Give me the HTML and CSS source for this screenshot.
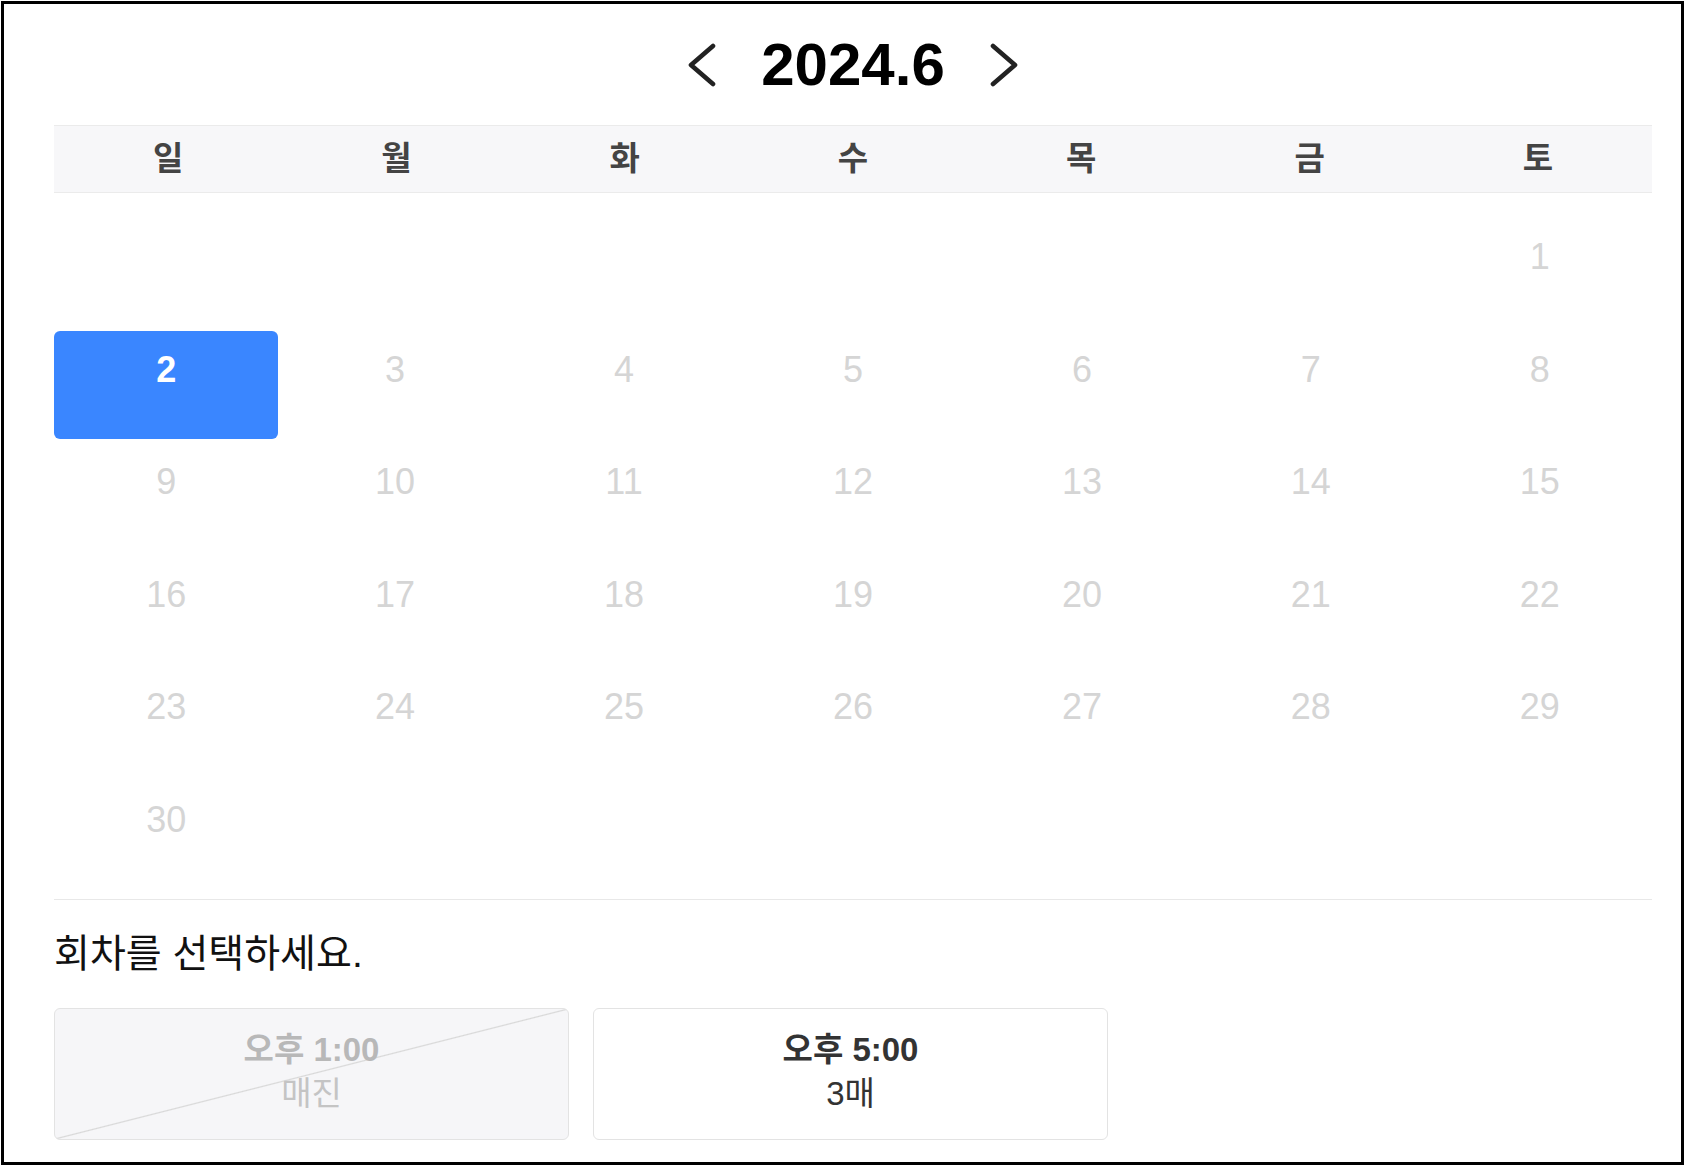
FILE: index.html
```
<!DOCTYPE html>
<html lang="ko">
<head>
    <meta charset="UTF-8">
    <meta name="viewport" content="width=device-width, initial-scale=1.0">
    <title>공연 예매 - 날짜 선택</title>
    <link rel="stylesheet" href="styles.css">
</head>
<body>
    <div class="frame">
        <div class="month-nav">
            <svg class="nav-arrow" viewBox="0 0 30 44"><polyline points="26,3 4,22 26,41"/></svg>
            <span class="month-title">2024.6</span>
            <svg class="nav-arrow" viewBox="0 0 30 44"><polyline points="4,3 26,22 4,41"/></svg>
        </div>

        <div class="week-head">
            <span>일</span>
            <span>월</span>
            <span>화</span>
            <span>수</span>
            <span>목</span>
            <span>금</span>
            <span>토</span>
        </div>

        <div class="days">
            <div class="day"></div>
            <div class="day"></div>
            <div class="day"></div>
            <div class="day"></div>
            <div class="day"></div>
            <div class="day"></div>
            <div class="day">1</div>

            <div class="day selected">2</div>
            <div class="day">3</div>
            <div class="day">4</div>
            <div class="day">5</div>
            <div class="day">6</div>
            <div class="day">7</div>
            <div class="day">8</div>

            <div class="day">9</div>
            <div class="day">10</div>
            <div class="day">11</div>
            <div class="day">12</div>
            <div class="day">13</div>
            <div class="day">14</div>
            <div class="day">15</div>

            <div class="day">16</div>
            <div class="day">17</div>
            <div class="day">18</div>
            <div class="day">19</div>
            <div class="day">20</div>
            <div class="day">21</div>
            <div class="day">22</div>

            <div class="day">23</div>
            <div class="day">24</div>
            <div class="day">25</div>
            <div class="day">26</div>
            <div class="day">27</div>
            <div class="day">28</div>
            <div class="day">29</div>

            <div class="day">30</div>
        </div>

        <div class="sessions">
            <p class="session-title">회차를 선택하세요.</p>
            <div class="session-list">
                <div class="session soldout">
                    <span class="session-time">오후 1:00</span>
                    <span>매진</span>
                </div>
                <div class="session">
                    <span class="session-time">오후 5:00</span>
                    <span>3매</span>
                </div>
            </div>
        </div>
    </div>
</body>
</html>
```

FILE: styles.css
```
body {
    margin: 0;
    font-family: "Liberation Sans", "Noto Sans CJK KR", sans-serif;
    background-color: #fff;
}

.frame {
    margin: 1px;
    height: 1164px;
    box-sizing: border-box;
    border: 3px solid #000;
    padding: 26px 29px 0 50px;
}

/* month header */
.month-nav {
    display: flex;
    justify-content: center;
    align-items: center;
    gap: 44px;
    height: 70px;
}

.month-title {
    font-size: 60px;
    font-weight: bold;
    line-height: 70px;
    color: #000;
}

.nav-arrow {
    width: 30px;
    height: 44px;
    fill: none;
    stroke: #222;
    stroke-width: 4.6;
    stroke-linecap: round;
    stroke-linejoin: round;
}

.week-head {
    display: grid;
    grid-template-columns: repeat(7, 1fr);
    align-items: center;
    height: 68px;
    box-sizing: border-box;
    margin-top: 25px;
    padding-bottom: 6px;
    background-color: #f7f7f9;
    border-top: 1px solid #ebebeb;
    border-bottom: 1px solid #ebebeb;
}

.week-head span {
    text-align: center;
    font-size: 33px;
    font-weight: bold;
    color: #444;
}

/* days */
.days {
    display: grid;
    grid-template-columns: repeat(7, 1fr);
    gap: 4.6px;
    margin-top: 25px;
}

.day {
    height: 108px;
    box-sizing: border-box;
    padding-top: 12px;
    border-radius: 6px;
    text-align: center;
    font-size: 36px;
    line-height: 54px;
    color: #d5d5d5;
}

.day.selected {
    background-color: #3a86ff;
    color: #fff;
    font-weight: bold;
}

/* sessions */
.sessions {
    margin-top: 10px;
    border-top: 1px solid #e8e8e8;
}

.session-title {
    margin: 29px 0 0;
    font-size: 39px;
    line-height: 50px;
    color: #111;
}

.session-list {
    display: grid;
    grid-template-columns: repeat(3, 515px);
    gap: 24px;
    margin-top: 29px;
}

.session {
    display: flex;
    flex-direction: column;
    justify-content: center;
    align-items: center;
    height: 132px;
    box-sizing: border-box;
    padding-bottom: 4px;
    border: 1px solid #e3e3e3;
    border-radius: 6px;
    font-size: 33px;
    line-height: 44px;
    color: #333;
}

.session-time {
    font-weight: bold;
}

.session.soldout {
    color: #c4c4c4;
    background: linear-gradient(to bottom right, #f6f6f8 calc(50% - 1.2px), #d8d8d8 50%, #f6f6f8 calc(50% + 1.2px));
}

.session.soldout .session-time {
    color: #b8b8b8;
}
```
